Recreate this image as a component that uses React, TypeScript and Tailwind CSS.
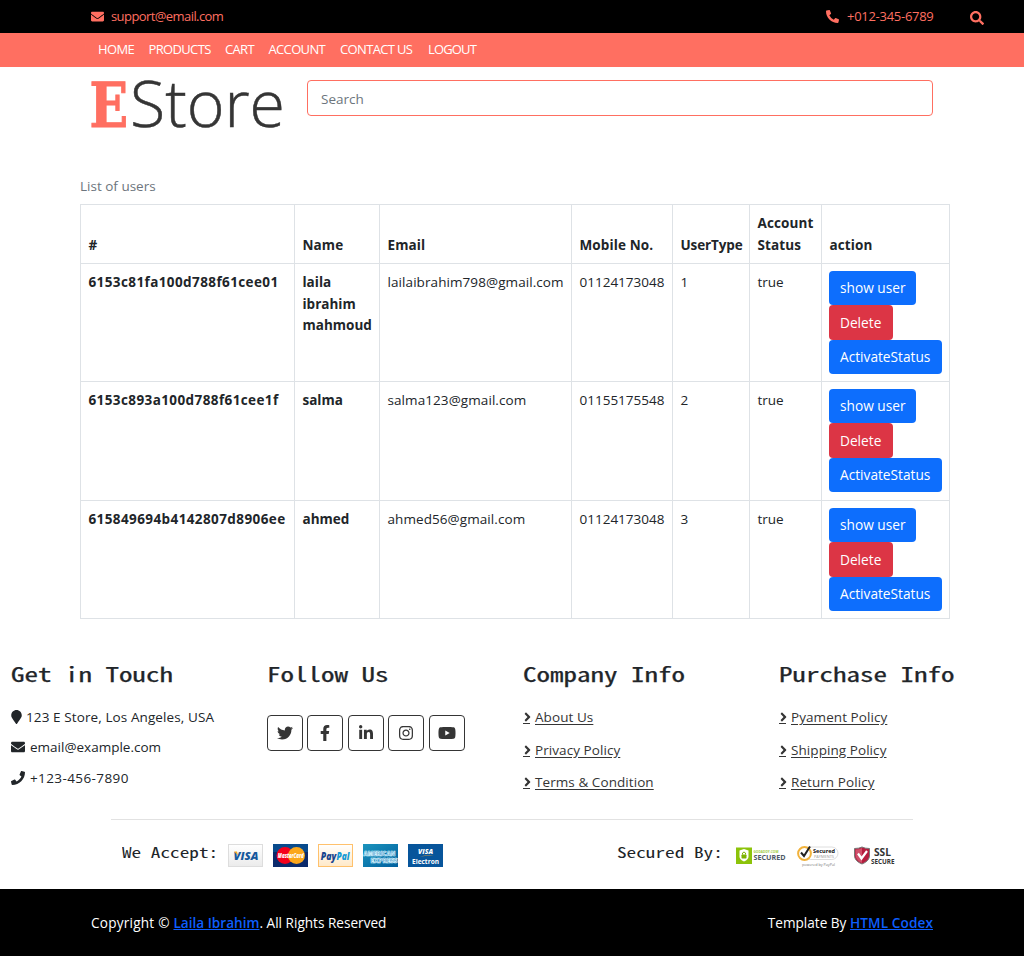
import React from 'react';
import {
  FaAngleRight,
  FaEnvelope,
  FaFacebookF,
  FaInstagram,
  FaLinkedinIn,
  FaMapMarker,
  FaPhone,
  FaPhoneAlt,
  FaSearch,
  FaTwitter,
  FaYoutube,
} from 'react-icons/fa';

const users = [
  { id: '6153c81fa100d788f61cee01', name: 'laila ibrahim mahmoud', email: 'lailaibrahim798@gmail.com', mobile: '01124173048', type: 1, status: 'true', height: 'h-[118px]' },
  { id: '6153c893a100d788f61cee1f', name: 'salma', email: 'salma123@gmail.com', mobile: '01155175548', type: 2, status: 'true', height: 'h-[119px]' },
  { id: '615849694b4142807d8906ee', name: 'ahmed', email: 'ahmed56@gmail.com', mobile: '01124173048', type: 3, status: 'true', height: 'h-[118px]' },
];

const navItems = [
  { label: 'HOME', width: 'w-[50.5px]' },
  { label: 'PRODUCTS', width: 'w-[76.5px]' },
  { label: 'CART', width: 'w-[43.5px]' },
  { label: 'ACCOUNT', width: 'w-[71.5px]' },
  { label: 'CONTACT US', width: 'w-[88px]' },
  { label: 'LOGOUT', width: 'w-[60px]' },
];

function TopBar() {
  return (
    <div className="flex h-[33px] items-center bg-black text-[13px] text-[#ff6f61]">
      <div className="flex flex-1 items-center pl-[91px]">
        <FaEnvelope className="mr-[7px] size-[13px]" />
        <span className="tracking-[-0.58px]">support@email.com</span>
      </div>
      <div className="flex items-center pr-[40px]">
        <FaPhoneAlt className="mr-[8px] size-[13px]" />
        <span className="w-[87px] whitespace-nowrap tracking-[-0.28px]">+012-345-6789</span>
        <FaSearch className="ml-[36px] mt-[3px] size-[14px]" />
      </div>
    </div>
  );
}

function NavBar() {
  return (
    <nav className="flex h-[34px] items-center bg-[#ff6f61] pl-[98px] text-[13px] tracking-[-0.65px] text-white">
      {navItems.map((n) => (
        <a key={n.label} className={`${n.width} whitespace-nowrap last:tracking-[-0.85px]`}>{n.label}</a>
      ))}
    </nav>
  );
}

function Header() {
  return (
    <header className="flex h-[111px] items-start pl-[91px] pt-[13px]">
      <svg width="192" height="52" viewBox="0 0 192 52" className="shrink-0 overflow-visible">
        <text transform="translate(-1.5 46.5) scale(.81 1)" x="0" y="0" fontFamily="'DejaVu Serif'" fontWeight="700" fontSize="62.500" fill="#ff6f61" stroke="#ff6f61" strokeWidth="1">E</text>
        <text x="39" y="46.800" fontFamily="'Open Sans'" fontWeight="300" fontSize="64" fill="#353535" stroke="#353535" strokeWidth=".5" textLength="155" lengthAdjust="spacingAndGlyphs">Store</text>
      </svg>
      <div className="ml-[24px] flex h-[36px] w-[626px] items-center rounded-[4px] border border-[#ff6f61] px-[13px] pt-[2px] text-[13.5px] text-[#6c757d]">
        Search
      </div>
    </header>
  );
}

const cell = 'border border-[#dee2e6] px-[7.5px] pt-[8px] pb-[6.4px] align-top';
const head = 'border border-[#dee2e6] px-[7.5px] pt-[8px] pb-[6.4px] align-bottom text-left font-bold tracking-[0.12px]';
const actionCell = 'border border-[#dee2e6] p-[7px] align-top';
const button = 'flex h-[34.3px] items-center rounded-[4px] text-[13.7px] text-white';

function UserTable() {
  return (
    <section className="ml-[80px] w-[870px]">
      <p className="flex h-[26px] items-start text-[13.5px] leading-[16px] text-[#6c757d]">List of users</p>
      <table className="w-[869px] table-fixed border-collapse text-[13.5px] leading-[21.6px] text-[#212529]">
        <colgroup>
          <col className="w-[214px]" />
          <col className="w-[85px]" />
          <col className="w-[192px]" />
          <col className="w-[101px]" />
          <col className="w-[77px]" />
          <col className="w-[72px]" />
          <col className="w-[128px]" />
        </colgroup>
        <thead>
          <tr className="h-[59px]">
            <th className={head}>#</th>
            <th className={head}>Name</th>
            <th className={head}>Email</th>
            <th className={`${head} whitespace-nowrap`}>Mobile No.</th>
            <th className={`${head} whitespace-nowrap`}><span className="tracking-[-0.12px]">UserType</span></th>
            <th className={head}>Account Status</th>
            <th className={head}>action</th>
          </tr>
        </thead>
        <tbody>
          {users.map((u) => (
            <tr key={u.id} className={u.height}>
              <td className={`${cell} whitespace-nowrap font-bold tracking-[0.4px]`}>{u.id}</td>
              <td className={`${cell} font-bold`}>{u.name}</td>
              <td className={`${cell} whitespace-nowrap tracking-[0.08px]`}>{u.email}</td>
              <td className={`${cell} whitespace-nowrap`}>{u.mobile}</td>
              <td className={cell}>{u.type}</td>
              <td className={cell}>{u.status}</td>
              <td className={actionCell}>
                <button className={`${button} w-[87px] bg-[#0d6efd] pl-[11px]`}>show user</button>
                <button className={`${button} w-[64px] bg-[#dc3545] pl-[11px]`}>Delete</button>
                <button className={`${button} w-[113px] bg-[#0d6efd] pl-[11px]`}>ActivateStatus</button>
              </td>
            </tr>
          ))}
        </tbody>
      </table>
    </section>
  );
}

const heading = "h-[28px] w-max origin-left scale-x-[1.317] whitespace-nowrap font-['Noto_Sans_Mono_CJK_SC','Liberation_Mono',monospace] text-[20.5px] leading-[26px] text-[#212529] [-webkit-text-stroke:0.25px_#212529]";

function LinkColumn({ title, links }: { title: string; links: string[] }) {
  return (
    <div className="w-[256px] shrink-0">
      <h3 className={heading}>{title}</h3>
      <ul className="mt-[18px] text-[13.5px] tracking-[0.07px] text-[#353535]">
        {links.map((l) => (
          <li key={l} className="flex h-[32.5px] items-start leading-[22px]">
            <span className="mr-[5px] flex h-[18px] w-[7px] items-center border-b border-[#353535] pt-[5px]">
              <FaAngleRight className="h-[14px] w-[9px] shrink-0" />
            </span>
            <a className="underline underline-offset-2">{l}</a>
          </li>
        ))}
      </ul>
    </div>
  );
}

const socials = [
  { Icon: FaTwitter, size: 'size-[16px]' },
  { Icon: FaFacebookF, size: 'size-[16px]' },
  { Icon: FaLinkedinIn, size: 'size-[16px]' },
  { Icon: FaInstagram, size: 'size-[16px]' },
  { Icon: FaYoutube, size: 'size-[18px]' },
];

function Footer() {
  return (
    <div className="mt-[41px] flex h-[159px] pl-[11px]">
      <div className="w-[256px] shrink-0">
        <h3 className={heading}>Get in Touch</h3>
        <div className="mt-[18px] text-[13.5px] leading-[22px] text-[#212529]">
          <p className="flex h-[30.4px] items-start"><FaMapMarker className="mr-[4px] mt-[4px] h-[14px] w-[11px]" /><span className="tracking-[0.1px]">123 E Store, Los Angeles, USA</span></p>
          <p className="flex h-[30.4px] items-start"><FaEnvelope className="mr-[5px] mt-[4px] size-[14px]" /><span>email@example.com</span></p>
          <p className="flex h-[30.4px] items-start"><FaPhone className="mr-[5px] mt-[4px] size-[14px]" /><span className="tracking-[0.4px]">+123-456-7890</span></p>
        </div>
      </div>
      <div className="w-[256px] shrink-0">
        <h3 className={heading}>Follow Us</h3>
        <div className="mt-[27px] flex gap-[4.4px] text-[#353535]">
          {socials.map(({ Icon, size }, i) => (
            <a key={i} className="flex size-[36px] items-center justify-center rounded-[4px] border border-[#353535]">
              <Icon className={size} />
            </a>
          ))}
        </div>
      </div>
      <LinkColumn title="Company Info" links={['About Us', 'Privacy Policy', 'Terms & Condition']} />
      <LinkColumn title="Purchase Info" links={['Pyament Policy', 'Shipping Policy', 'Return Policy']} />
    </div>
  );
}

function Cards() {
  return (
    <svg width="215" height="23" viewBox="0 0 215 23" fontFamily="'Open Sans', sans-serif" fontWeight="800" textAnchor="middle">
      <defs>
        <linearGradient id="amex" x1="0" y1="0" x2="1" y2="1"><stop offset="0" stopColor="#1b94bd" /><stop offset="1" stopColor="#005f9e" /></linearGradient>
        <linearGradient id="paypal" x1="0" y1="0" x2="0" y2="1"><stop offset="0" stopColor="#fff" /><stop offset="1" stopColor="#ffe9c8" /></linearGradient>
        <linearGradient id="visa" x1="0" y1="0" x2="0" y2="1"><stop offset="0" stopColor="#fff" /><stop offset="1" stopColor="#ebebeb" /></linearGradient>
      </defs>
      <rect x=".5" y=".5" width="34" height="22" fill="url(#visa)" stroke="#ddd" />
      <text x="18" y="15.5" fontSize="11" fontStyle="italic" fill="#16589c" textLength="25" lengthAdjust="spacingAndGlyphs">VISA</text>
      <path d="M6 7.5h3l1 4z" fill="#f3a91f" />
      <rect x="45" width="35" height="23" fill="#0b2a6b" />
      <rect x="45" width="35" height="8" fill="#084a8c" />
      <circle cx="57" cy="11.5" r="8.5" fill="#f5001a" />
      <circle cx="68.500" cy="11.500" r="8.500" fill="#fba71b" />
      <text x="62.800" y="14" fontSize="6.500" fontStyle="italic" fill="#fff" textLength="26" lengthAdjust="spacingAndGlyphs">MasterCard</text>
      <rect x="90.500" y=".5" width="34" height="22" fill="url(#paypal)" stroke="#ffc16c" />
      <text x="100.500" y="15.500" fontSize="10" fontStyle="italic" fill="#17458f" textLength="15.500" lengthAdjust="spacingAndGlyphs">Pay</text>
      <text x="115" y="15.500" fontSize="10" fontStyle="italic" fill="#139ad6" textLength="13" lengthAdjust="spacingAndGlyphs">Pal</text>
      <rect x="135" width="35" height="23" fill="url(#amex)" />
      <text x="151.500" y="11.500" fontSize="6.500" fill="none" stroke="#d8f3ff" strokeWidth=".7" textLength="32" lengthAdjust="spacingAndGlyphs">AMERICAN</text>
      <text x="156" y="19" fontSize="6.500" fill="none" stroke="#d8f3ff" strokeWidth=".7" textLength="27" lengthAdjust="spacingAndGlyphs">EXPRESS</text>
      <rect x="180" width="35" height="23" fill="#07559b" />
      <text x="197.500" y="9.500" fontSize="7" fontStyle="italic" fill="#fff" textLength="15" lengthAdjust="spacingAndGlyphs">VISA</text>
      <path d="M192 12.500q8-2 14-1q-6 .2-14 1z" fill="#e8a13a" />
      <text x="197.500" y="20" fontSize="6.500" fontWeight="700" fill="#fff" textLength="27" lengthAdjust="spacingAndGlyphs">Electron</text>
    </svg>
  );
}

function SecureBadges() {
  return (
    <svg width="160" height="24" viewBox="0 0 160 24" fontFamily="'Open Sans', sans-serif" fontWeight="700">
      <rect x="0" y="3.500" width="16" height="16.500" fill="#8cc30a" />
      <path d="M3.500 6.500L8 5l4.500 1.500v6q0 3-4.500 5q-4.500-2-4.500-5z" fill="#fff" />
      <rect x="5.500" y="10.500" width="5" height="4" rx=".7" fill="#7db300" />
      <path d="M6.500 10.500V9q1.500-2 3 0v1.500" fill="none" stroke="#7db300" />
      <text x="17.500" y="8.500" fontSize="3.800" fill="#9ccb35" textLength="25" lengthAdjust="spacingAndGlyphs">GODADDY.COM</text>
      <text x="17.500" y="15.500" fontSize="7.500" fill="#4c5865" textLength="32" lengthAdjust="spacingAndGlyphs">SECURED</text>
      <rect x="68" y="3" width="34" height="12.500" rx="6.200" fill="#fff" stroke="#d5d5d5" strokeWidth=".8" />
      <circle cx="68.500" cy="9.500" r="6.400" fill="#fff" stroke="#f1b23c" strokeWidth="2" />
      <path d="M65 8.500l3 3.500l6-9.500" fill="none" stroke="#222" strokeWidth="2" />
      <text x="77" y="8.500" fontSize="6" fill="#111" textLength="22" lengthAdjust="spacingAndGlyphs">Secured</text>
      <text x="78" y="13.500" fontSize="4" fontWeight="400" fill="#999" textLength="20" lengthAdjust="spacingAndGlyphs">PAYMENTS</text>
      <text x="66" y="21.500" fontSize="4" fontWeight="400" fill="#777" textLength="33" lengthAdjust="spacingAndGlyphs">powered by PayPal</text>
      <path d="M118.500 4.500q4.500 0 7.500-1.500q3 1.500 7.500 1.500v8q-1 5-7.500 7.500q-6.500-2.500-7.500-7.500z" fill="#b51d3e" stroke="#777" />
      <path d="M119.500 5.500q4 0 6.500-1.500v15q-5.500-2.500-6.500-7z" fill="#d0506a" />
      <path d="M122 9.500l3.500 5l5.500-7.500" fill="none" stroke="#fff" strokeWidth="2.200" />
      <text x="138" y="11.500" fontSize="10" fill="#333" textLength="17" lengthAdjust="spacingAndGlyphs">SSL</text>
      <text x="135" y="19.800" fontSize="7" fill="#333" textLength="23.500" lengthAdjust="spacingAndGlyphs">SECURE</text>
    </svg>
  );
}

const caption = "block w-max origin-left scale-x-[1.31] whitespace-nowrap font-['Noto_Sans_Mono_CJK_SC','Liberation_Mono',monospace] text-[14.7px] font-light leading-[20px] text-[#212529]";

function PaymentRow() {
  return (
    <div className="mx-[111px] flex h-[70px] border-t border-[#e2e2e2] pt-[22px]">
      <div className="ml-[11px] w-[106px]"><span className={caption}>We Accept:</span></div>
      <div className="mt-[2px]"><Cards /></div>
      <div className="ml-[174px] w-[119px]"><span className={caption}>Secured By:</span></div>
      <div className="mt-[2px]"><SecureBadges /></div>
    </div>
  );
}

function BottomBar() {
  return (
    <div className="flex h-[68px] items-center justify-between bg-black pl-[91px] pr-[91px] text-[13.6px] font-medium text-white">
      <p><span className="tracking-[0.22px]">Copyright © </span><a className="font-semibold text-[#0d5efd] underline">Laila Ibrahim</a>. All Rights Reserved</p>
      <p>Template By <a className="font-semibold tracking-[0.1px] text-[#0d5efd] underline">HTML Codex</a></p>
    </div>
  );
}

export default function App() {
  return (
    <div className="h-[956px] w-[1024px] overflow-hidden bg-white font-['Open_Sans','Noto_Sans',sans-serif]">
      <TopBar />
      <NavBar />
      <Header />
      <UserTable />
      <Footer />
      <PaymentRow />
      <BottomBar />
    </div>
  );
}
